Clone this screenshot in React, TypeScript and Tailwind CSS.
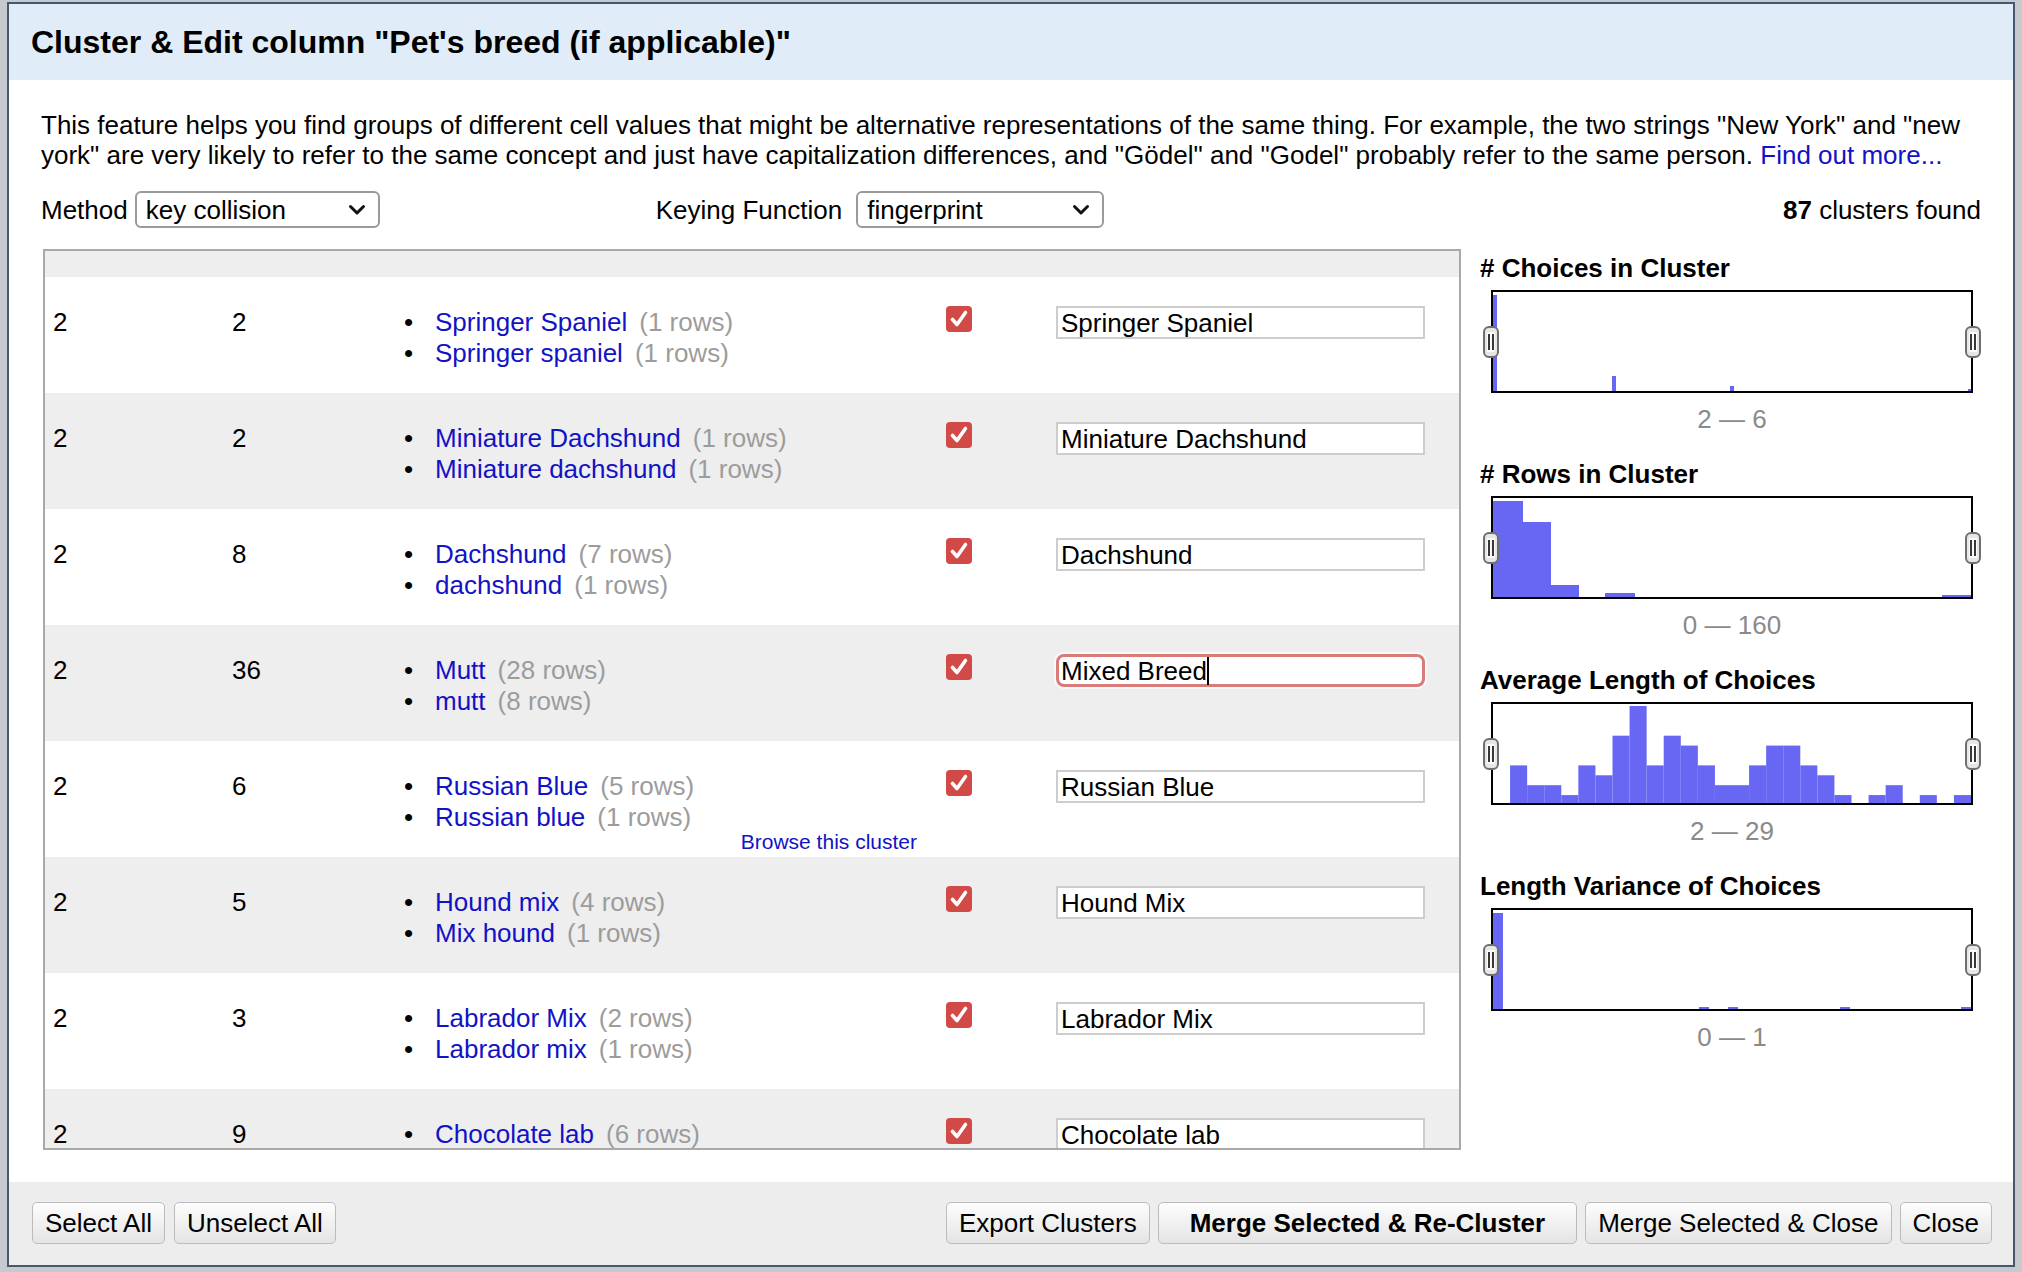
import React from 'react';

type Cluster = {
  size: number;
  rows: number;
  values: [string, number][];
  newValue: string;
  focused?: boolean;
  browse?: boolean;
};

const clusters: Cluster[] = [
  { size: 2, rows: 3, values: [['Beagle Mix', 2], ['Beagle mix', 1]], newValue: 'Beagle Mix' },
  { size: 2, rows: 2, values: [['Springer Spaniel', 1], ['Springer spaniel', 1]], newValue: 'Springer Spaniel' },
  { size: 2, rows: 2, values: [['Miniature Dachshund', 1], ['Miniature dachshund', 1]], newValue: 'Miniature Dachshund' },
  { size: 2, rows: 8, values: [['Dachshund', 7], ['dachshund', 1]], newValue: 'Dachshund' },
  { size: 2, rows: 36, values: [['Mutt', 28], ['mutt', 8]], newValue: 'Mixed Breed', focused: true },
  { size: 2, rows: 6, values: [['Russian Blue', 5], ['Russian blue', 1]], newValue: 'Russian Blue', browse: true },
  { size: 2, rows: 5, values: [['Hound mix', 4], ['Mix hound', 1]], newValue: 'Hound Mix' },
  { size: 2, rows: 3, values: [['Labrador Mix', 2], ['Labrador mix', 1]], newValue: 'Labrador Mix' },
  { size: 2, rows: 9, values: [['Chocolate lab', 6], ['Chocolate Lab', 3]], newValue: 'Chocolate lab' },
];

type Bar = { x: number; w: number; h: number };

// inner box is 478 x 99
const avgCounts = [0, 4, 2, 2, 1, 4, 3, 7, 10, 4, 7, 6, 4, 2, 2, 4, 6, 6, 4, 3, 1, 0, 1, 2, 0, 1, 0, 1];
const binW = 478 / avgCounts.length;

const facets: { title: string; range: string; bars: Bar[] }[] = [
  {
    title: '# Choices in Cluster',
    range: '2 — 6',
    bars: [
      { x: 0, w: 4, h: 96 },
      { x: 119, w: 4, h: 15 },
      { x: 237, w: 4, h: 5 },
      { x: 475, w: 3, h: 2 },
    ],
  },
  {
    title: '# Rows in Cluster',
    range: '0 — 160',
    bars: [
      { x: 0, w: 30, h: 96 },
      { x: 30, w: 28, h: 75 },
      { x: 58, w: 28, h: 12 },
      { x: 112, w: 30, h: 4 },
      { x: 449, w: 29, h: 2 },
    ],
  },
  {
    title: 'Average Length of Choices',
    range: '2 — 29',
    bars: avgCounts
      .map((c, i) => ({ x: i * binW, w: binW, h: c === 0 ? 0 : (c * 10 - 2) * 0.99 }))
      .filter((b) => b.h > 0),
  },
  {
    title: 'Length Variance of Choices',
    range: '0 — 1',
    bars: [
      { x: 0, w: 10, h: 96 },
      { x: 206, w: 10, h: 2 },
      { x: 235, w: 10, h: 2 },
      { x: 347, w: 10, h: 2 },
      { x: 468, w: 10, h: 2 },
    ],
  },
];

function Checkbox() {
  return (
    <svg width="26" height="26" viewBox="0 0 26 26">
      <rect x="0" y="0" width="26" height="26" rx="4" fill="#d24a47" />
      <path d="M6.5 13.5 L11 18.5 L19.5 6.5" fill="none" stroke="#fff" strokeWidth="3.6" strokeLinecap="round" strokeLinejoin="round" />
    </svg>
  );
}

function Handle() {
  return (
    <svg width="16" height="32" viewBox="0 0 16 32">
      <rect x="1" y="1" width="14" height="30" rx="5" fill="#e6e6e6" stroke="#6f6f6f" strokeWidth="2" />
      <rect x="4" y="6" width="8" height="20" rx="1" fill="#fafafa" />
      <line x1="6" y1="8" x2="6" y2="24" stroke="#222" strokeWidth="1.8" />
      <line x1="10" y1="8" x2="10" y2="24" stroke="#222" strokeWidth="1.8" />
    </svg>
  );
}

function Chevron() {
  return (
    <svg width="18" height="12" viewBox="0 0 18 12">
      <path d="M2.5 2.5 L9 9 L15.5 2.5" fill="none" stroke="#111" strokeWidth="3" strokeLinecap="round" strokeLinejoin="round" />
    </svg>
  );
}

function Select({ value, width }: { value: string; width: string }) {
  return (
    <div className={`${width} h-[37px] flex items-center justify-between border-2 border-[#9a9a9a] rounded-[6px] bg-white pl-[9px] pr-[12px]`}>
      <span>{value}</span>
      <Chevron />
    </div>
  );
}

function Button({ label, bold }: { label: string; bold?: boolean }) {
  return (
    <button
      className={`h-[42px] border border-[#bcbcbc] rounded-[5px] bg-linear-to-b from-[#fdfdfd] to-[#e4e4e4] text-[26px] leading-none text-black ${
        bold ? 'font-bold px-[31px]' : 'px-[12px]'
      }`}
    >
      {label}
    </button>
  );
}

function ClusterRow({ c, shade }: { c: Cluster; shade: boolean }) {
  return (
    <div className={`grid grid-cols-[179px_172px_540px_110px_1fr] h-[116px] shrink-0 ${shade ? 'bg-[#eeeeee]' : 'bg-white'}`}>
      <div className="pl-[8px] pt-[30px] leading-[31px]">{c.size}</div>
      <div className="pl-[8px] pt-[30px] leading-[31px]">{c.rows}</div>
      <div className="relative pl-[8px] pt-[30px] leading-[31px]">
        {c.values.map(([v, n]) => (
          <div key={v} className="flex">
            <span className="w-[31px]">•</span>
            <span className="text-[#1212c6]">{v}</span>
            <span className="ml-[12px] text-[#9c9c9c]">({n} rows)</span>
          </div>
        ))}
        {c.browse && (
          <span className="absolute right-[19px] bottom-[4px] text-[21px] leading-[22px] text-[#1212c6]">Browse this cluster</span>
        )}
      </div>
      <div className="pl-[10px] pt-[29px]">
        <Checkbox />
      </div>
      <div className="pl-[10px] pt-[29px]">
        {c.focused ? (
          <div className="w-[369px] h-[33px] flex items-center border-[3px] border-[#d87b79] rounded-[8px] bg-white pl-[2px] shadow-[0_0_0_2px_#fafafa]">
            <span>{c.newValue}</span>
            <span className="w-[2px] h-[28px] bg-black" />
          </div>
        ) : (
          <div className="w-[369px] h-[33px] flex items-center border-2 border-[#cdcdcd] bg-white pl-[3px]">
            {c.newValue}
          </div>
        )}
      </div>
    </div>
  );
}

function Facet({ title, range, bars }: { title: string; range: string; bars: Bar[] }) {
  return (
    <div className="mb-[25px]">
      <div className="font-bold leading-[30px]">{title}</div>
      <div className="relative mt-[7px] ml-[11px] w-[482px] h-[103px] border-2 border-black bg-white">
        <svg className="block" width="478" height="99" viewBox="0 0 478 99">
          {bars.map((b, i) => (
            <rect key={i} x={b.x} y={99 - b.h} width={b.w} height={b.h} fill="#6767f4" />
          ))}
        </svg>
        <div className="absolute left-[-10px] top-[34px]">
          <Handle />
        </div>
        <div className="absolute right-[-10px] top-[34px]">
          <Handle />
        </div>
      </div>
      <div className="mt-[11px] ml-[11px] w-[482px] text-center text-[#8a8a8a] leading-[30px]">{range}</div>
    </div>
  );
}

export default function App() {
  return (
    <div className="w-[2022px] h-[1272px] bg-[#c6c9cd] pt-[2px] pl-[7px] overflow-hidden font-['Liberation_Sans',Arial,sans-serif] text-black">
      <div className="w-[2008px] h-[1265px] border-2 border-[#46586e] flex flex-col bg-white">
        {/* Header */}
        <div className="h-[76px] shrink-0 bg-[#e1ecf9] flex items-center pl-[22px] text-[32px] font-bold">
          Cluster &amp; Edit column "Pet's breed (if applicable)"
        </div>

        {/* Body */}
        <div className="h-[1102px] shrink-0 px-[32px] pt-[30px] text-[26px] leading-[30px]">
          <p>
            This feature helps you find groups of different cell values that might be alternative representations of the same thing. For example, the two strings "New York" and "new york" are very likely to refer to the same concept and just have capitalization differences, and "Gödel" and "Godel" probably refer to the same person.{' '}
            <span className="text-[#1212c6]">Find out more...</span>
          </p>

          <div className="mt-[21px] h-[37px] flex items-center">
            <span className="mr-[7px]">Method</span>
            <Select value="key collision" width="w-[245px]" />
            <span className="ml-[276px] mr-[14px]">Keying Function</span>
            <Select value="fingerprint" width="w-[248px]" />
            <span className="ml-auto">
              <b>87</b> clusters found
            </span>
          </div>

          <div className="mt-[21px] flex gap-[19px]">
            {/* scrolled cluster table */}
            <div className="ml-[2px] w-[1418px] h-[901px] shrink-0 border-2 border-[#a9a9a9] overflow-hidden">
              <div className="-mt-[90px] flex flex-col">
                {clusters.map((c, i) => (
                  <ClusterRow key={i} c={c} shade={i % 2 === 0} />
                ))}
              </div>
            </div>

            <div className="flex-1 pt-[4px]">
              {facets.map((f) => (
                <Facet key={f.title} {...f} />
              ))}
            </div>
          </div>
        </div>

        {/* Footer */}
        <div className="flex-1 bg-[#ededed] flex items-start pt-[20px] pl-[23px] pr-[21px]">
          <div className="flex gap-[9px]">
            <Button label="Select All" />
            <Button label="Unselect All" />
          </div>
          <div className="ml-auto flex gap-[8px]">
            <Button label="Export Clusters" />
            <Button label="Merge Selected & Re-Cluster" bold />
            <Button label="Merge Selected & Close" />
            <Button label="Close" />
          </div>
        </div>
      </div>
    </div>
  );
}
